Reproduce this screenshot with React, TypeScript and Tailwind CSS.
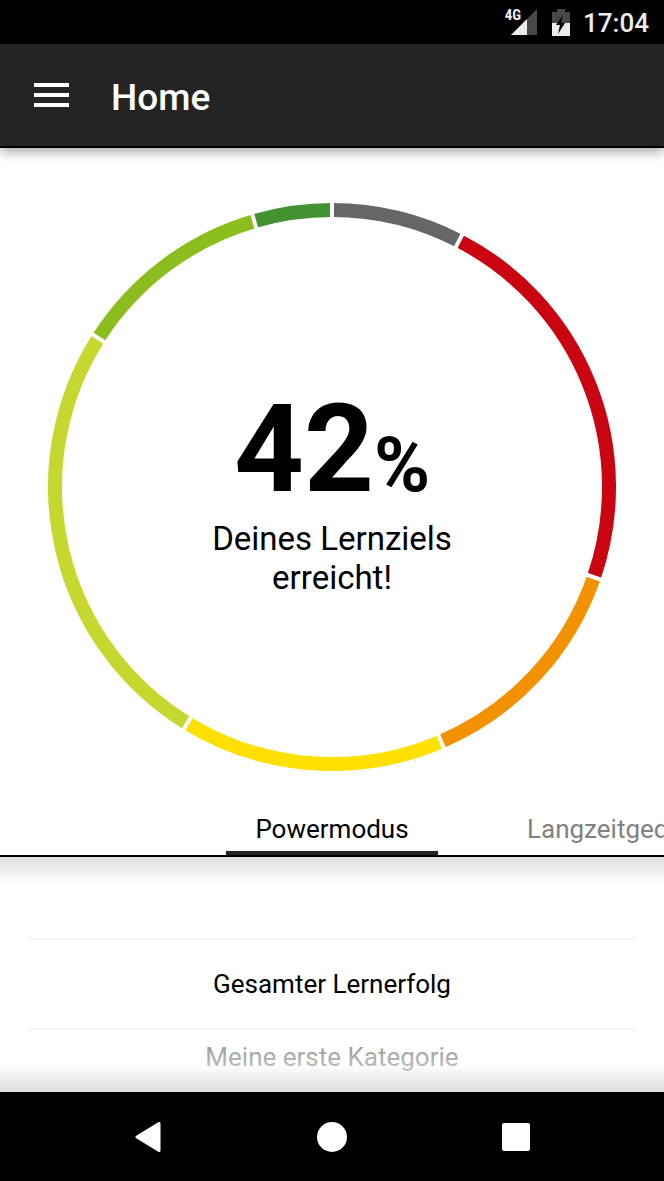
import React from "react";

type Segment = { from: number; to: number; color: string };

const SEGMENTS: Segment[] = [
  { from: 0, to: 27.3, color: "#666666" },
  { from: 27.3, to: 109, color: "#c90511" },
  { from: 109, to: 156.8, color: "#f39200" },
  { from: 156.8, to: 211.5, color: "#ffe000" },
  { from: 211.5, to: 302.5, color: "#c6d82f" },
  { from: 302.5, to: 343.7, color: "#8abd1d" },
  { from: 343.7, to: 360, color: "#429232" },
];

function pointAt(angle: number, radius: number): [number, number] {
  const rad = (angle * Math.PI) / 180;
  return [284 + radius * Math.sin(rad), 284 - radius * Math.cos(rad)];
}

function arc({ from, to }: Segment): string {
  const [x1, y1] = pointAt(from, 277);
  const [x2, y2] = pointAt(to, 277);
  return `M${x1} ${y1}A277 277 0 0 1 ${x2} ${y2}`;
}

function ProgressRing() {
  return (
    <svg viewBox="0 0 568 568" className="col-start-1 row-start-1 w-full" aria-hidden="true">
      {SEGMENTS.map((s) => (
        <path key={s.from} d={arc(s)} fill="none" stroke={s.color} strokeWidth="14" />
      ))}
      {SEGMENTS.map((s) => {
        const [x1, y1] = pointAt(s.from, 268);
        const [x2, y2] = pointAt(s.from, 286);
        return <line key={s.from} x1={x1} y1={y1} x2={x2} y2={y2} stroke="#fff" strokeWidth="4" />;
      })}
    </svg>
  );
}

function StatusBar() {
  return (
    <div className="flex h-11 items-center justify-end bg-black pr-[15px] text-[#ececec]">
      <span className="mb-3.5 font-[Roboto_Condensed,Roboto,sans-serif] text-[15px] font-bold leading-4">4G</span>
      <svg width="26" height="26" viewBox="0 0 26 26" className="-ml-2.5" aria-hidden="true">
        <path d="M0 26 26 0V26Z" fill="#484848" />
        <path d="M0 26 16 10V26Z" fill="#ececec" />
      </svg>
      <svg width="18" height="27" viewBox="0 0 18 27" className="ml-[15px]" aria-hidden="true">
        <path d="M5 0h8v3h5v12H0V3h5Z" fill="#484848" />
        <path d="M0 14h18v13H0Z" fill="#ececec" />
        <path d="M11 6 4 16h4l-2 9 7-11H9Z" fill="#000" />
      </svg>
      <span className="ml-[13px] pt-0.5 text-[26px] font-medium leading-8">17:04</span>
    </div>
  );
}

export default function App() {
  return (
    <div className="flex min-h-screen flex-col overflow-hidden bg-white font-[Roboto,sans-serif] text-black">
      <StatusBar />
      <header className="relative flex h-[104px] items-center gap-[42px] border-b-2 border-black bg-[#242424] px-[34px] text-white shadow-[0_3px_12px_rgba(0,0,0,0.4)]">
        <button type="button" aria-label="Menü" className="flex w-[35px] cursor-pointer flex-col gap-[6px]">
          <span className="h-1 w-full bg-white" />
          <span className="h-1 w-full bg-white" />
          <span className="h-1 w-full bg-white" />
        </button>
        <h1 className="pt-1.5 text-[37px] font-medium leading-10">Home</h1>
      </header>

      <main className="flex flex-1 flex-col">
        <section className="grid place-items-center px-12 pt-[55px] pb-8">
          <ProgressRing />
          <div className="col-start-1 row-start-1 flex flex-col items-center pt-3 text-center">
            <p className="text-[122px] font-bold leading-[120px]">
              42<span className="text-[76px]">%</span>
            </p>
            <p className="-mt-1.5 text-[33px] leading-[39px]">
              Deines Lernziels
              <br />
              erreicht!
            </p>
          </div>
        </section>

        <nav className="grid grid-cols-[minmax(0,1fr)_212px_minmax(0,1fr)] border-b-2 border-black text-[26px] leading-8">
          <button
            type="button"
            aria-current="true"
            className="col-start-2 cursor-pointer border-b-4 border-[#242424] pt-2.5 pb-1.5"
          >
            Powermodus
          </button>
          <div className="overflow-hidden pl-[89px]">
            <button type="button" className="cursor-pointer whitespace-nowrap pt-2.5 pb-1.5 text-[#808080]">
              Langzeitgedächtnis
            </button>
          </div>
        </nav>

        <section className="relative flex-1 px-7 pt-[81px] text-center text-[26px] leading-8">
          <ul>
            <li className="border-y-2 border-[#f5f5f5] py-7">Gesamter Lernerfolg</li>
            <li className="pt-[11px] pb-3 text-[#808080]">Meine erste Kategorie</li>
          </ul>
          <div className="pointer-events-none absolute inset-x-0 top-0 h-7 bg-linear-to-b from-black/13 to-transparent" />
          <div className="pointer-events-none absolute inset-x-0 bottom-0 h-14 bg-linear-to-t from-white/80 to-white/10" />
          <div className="pointer-events-none absolute inset-x-0 bottom-0 h-7 bg-linear-to-t from-black/13 to-transparent" />
        </section>
      </main>

      <footer className="flex h-[89px] items-center justify-center bg-black">
        <button type="button" aria-label="Zurück" className="flex w-[184px] cursor-pointer justify-center">
          <svg width="30" height="30" viewBox="0 0 30 30" aria-hidden="true">
            <path d="M26 1.5V28.5L4 15Z" fill="#fff" stroke="#fff" strokeWidth="3" strokeLinejoin="round" />
          </svg>
        </button>
        <button type="button" aria-label="Startbildschirm" className="flex w-[184px] cursor-pointer justify-center">
          <svg width="30" height="30" viewBox="0 0 30 30" aria-hidden="true">
            <circle cx="15" cy="15" r="15" fill="#fff" />
          </svg>
        </button>
        <button type="button" aria-label="Übersicht" className="flex w-[184px] cursor-pointer justify-center">
          <svg width="30" height="30" viewBox="0 0 30 30" aria-hidden="true">
            <rect x="1" y="1" width="28" height="28" rx="2" fill="#fff" />
          </svg>
        </button>
      </footer>
    </div>
  );
}
